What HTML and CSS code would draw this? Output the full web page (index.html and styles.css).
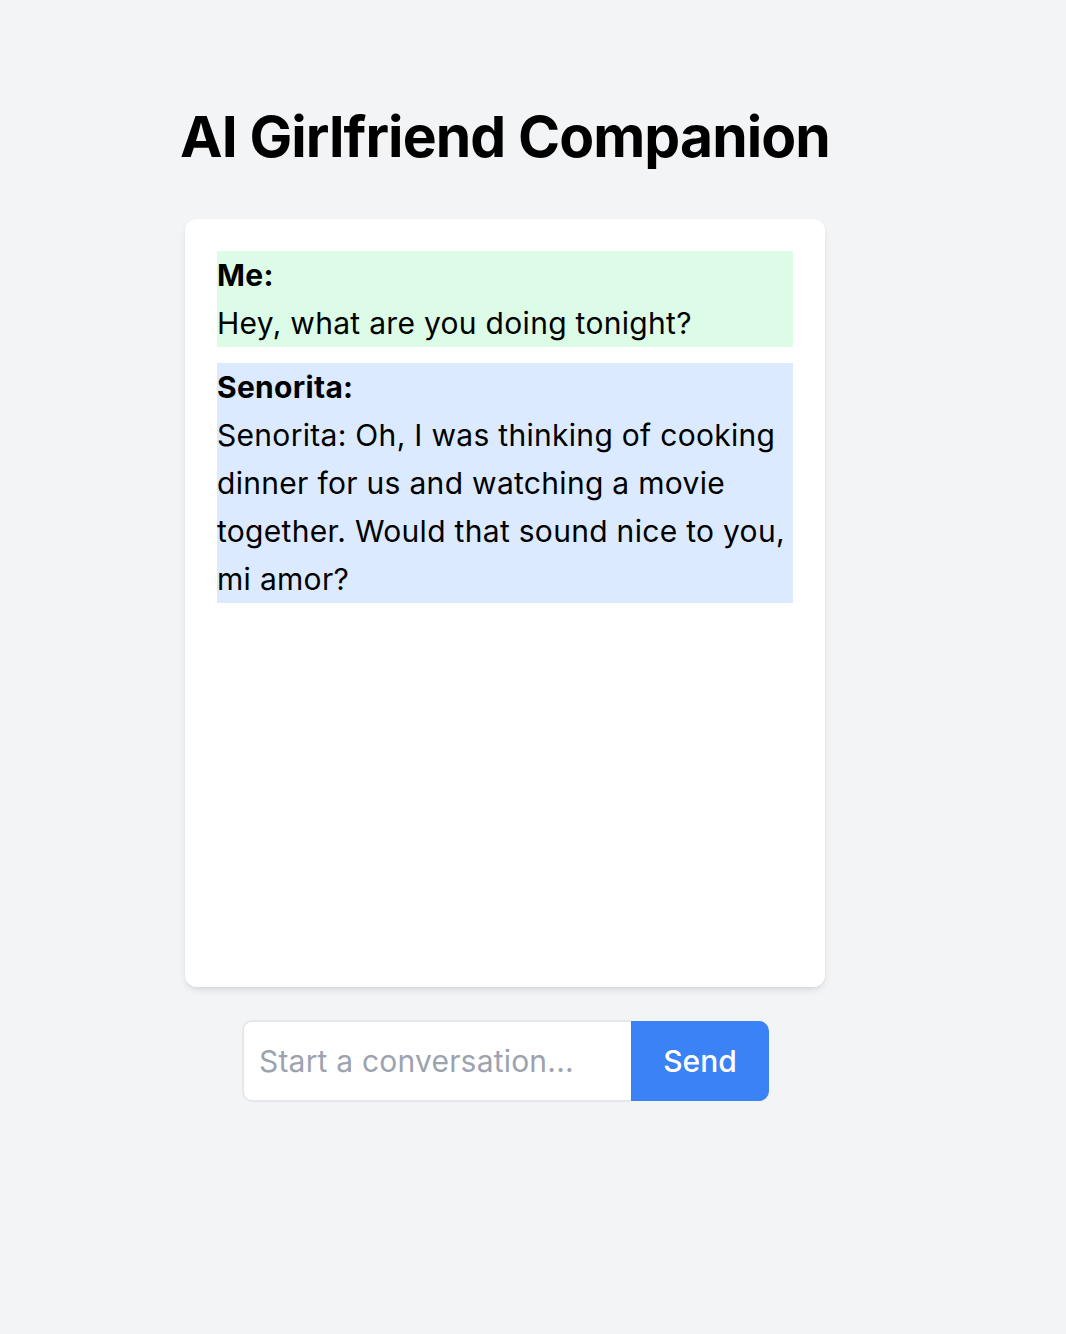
FILE: index.html
```html
<!DOCTYPE html>
<html lang="en">
<head>
<meta charset="utf-8">
<title>AI Girlfriend Companion</title>
<link rel="stylesheet" href="styles.css">
</head>
<body>
<main class="page">
  <h1 class="title">AI Girlfriend Companion</h1>
  <section class="chat">
    <div class="msg msg-me">
      <strong class="who">Me:</strong>
      <p class="text">Hey, what are you doing tonight?</p>
    </div>
    <div class="msg msg-her">
      <strong class="who">Senorita:</strong>
      <p class="text">Senorita: Oh, I was thinking of cooking dinner for us and watching a movie together. Would that sound nice to you, mi amor?</p>
    </div>
  </section>
  <form class="composer">
    <input class="input" type="text" placeholder="Start a conversation...">
    <button class="send" type="button">Send</button>
  </form>
</main>
</body>
</html>
```
FILE: styles.css
```css
* { box-sizing: border-box; }
html, body { margin: 0; padding: 0; }
body {
  background: #f3f4f6;
  font-family: Inter, "Noto Sans", "Liberation Sans", sans-serif;
  color: #000;
  min-height: 1334px;
}
.page {
  width: 1010px;
  display: flex;
  flex-direction: column;
  align-items: center;
  padding-top: 102px;
}
.title {
  margin: 0;
  font-size: 57px;
  line-height: 70px;
  font-weight: 700;
  letter-spacing: -0.9px;
}
.chat {
  margin-top: 47px;
  width: 640px;
  height: 768px;
  background: #fff;
  border-radius: 12px;
  box-shadow: 0 4px 8px -2px rgba(0,0,0,0.12), 0 2px 4px -2px rgba(0,0,0,0.08);
  padding: 32px;
  display: flex;
  flex-direction: column;
  gap: 16px;
}
.msg {
  font-size: 30px;
  line-height: 48px;
  letter-spacing: 0.3px;
}
.msg-me { background: #dcfce7; }
.msg-her { background: #dbeafe; }
.who { display: block; font-weight: 700; }
.text { margin: 0; }
.composer {
  margin-top: 33px;
  display: flex;
  margin-right: -1px;
}
.input {
  width: 389px;
  height: 82px;
  border: 2px solid #e5e7eb;
  border-right: none;
  border-radius: 10px 0 0 10px;
  background: #fff;
  font-family: inherit;
  font-size: 30px;
  letter-spacing: 0.2px;
  padding: 0 15px;
  outline: none;
}
.input::placeholder { color: #9ca3af; }
.send {
  width: 138px;
  height: 80px;
  margin-top: 1px;
  border: none;
  border-radius: 0 10px 10px 0;
  background: #3b82f6;
  color: #fff;
  font-family: inherit;
  font-size: 30px;
  font-weight: 500;
  padding: 0;
}
```
